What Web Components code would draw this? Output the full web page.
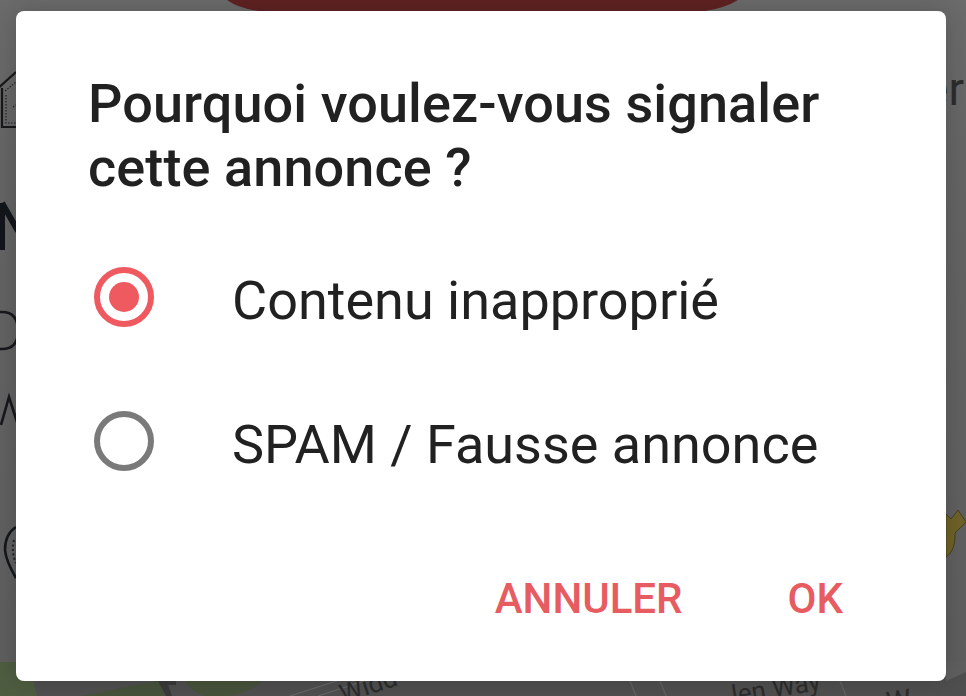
<!DOCTYPE html>
<html lang="fr">
<head>
<meta charset="utf-8">
<title>Signaler</title>
<style>
  html, body { margin: 0; height: 100%; background: #5f5f5f; overflow: hidden; }
</style>
</head>
<body>
<report-dialog title-text="Pourquoi voulez-vous signaler cette annonce ?">
  <report-option checked>Contenu inapproprié</report-option>
  <report-option>SPAM / Fausse annonce</report-option>
  <dialog-action slot="actions">ANNULER</dialog-action>
  <dialog-action slot="actions">OK</dialog-action>
</report-dialog>

<script>
// dimmed page behind the dialog, only the edges show
class MapBackdrop extends HTMLElement {
  constructor() {
    super();
    this.attachShadow({ mode: 'open' });
    this.shadowRoot.innerHTML = `
      <style>
        :host { position: absolute; inset: 0; display: block; }
        svg { display: block; width: 100%; height: 100%; }
        text { font-family: Roboto, "Liberation Sans", sans-serif; fill: #2c2c2c; }
      </style>
      <svg viewBox="0 0 966 696" xmlns="http://www.w3.org/2000/svg">
        <defs>
          <linearGradient id="dim" x1="0" y1="0" x2="0" y2="1">
            <stop offset="0" stop-color="#6b6b6b"/>
            <stop offset="0.25" stop-color="#646464"/>
            <stop offset="1" stop-color="#5e5e5e"/>
          </linearGradient>
        </defs>
        <rect width="966" height="662" fill="url(#dim)"/>
        <path d="M227 0 Q238 8 258 11 H705 Q725 8 738 0 Z" fill="#5f2222"/>

        <!-- house icon -->
        <path d="M-6 92 L16 72 M2 88 V127 H16" fill="none" stroke="#16181a" stroke-width="2.2"/>
        <path d="M5 91 L16 82 M6 95 V123 H16 M13 107 L16 105" fill="none" stroke="#222" stroke-width="1.2" stroke-dasharray="1.5 1.5"/>

        <!-- cut off letters on the left -->
        <path d="M2 203 L18 231 M2 203 V250" fill="none" stroke="#12161a" stroke-width="6"/>
        <path d="M-2 312 H2 Q18 312 18 331 Q18 349 2 349 H-2" fill="none" stroke="#16181b" stroke-width="2.6"/>
        <path d="M1 425 L9 397 L18 425" fill="none" stroke="#16181b" stroke-width="2.6"/>

        <!-- pin icon -->
        <path d="M16 527 Q5 534 5 550 Q6 561 16 578" fill="none" stroke="#14171a" stroke-width="2.6"/>
        <path d="M14 540 Q11 552 16 563" fill="none" stroke="#222" stroke-width="2" stroke-dasharray="2 2.5"/>

        <!-- text behind on the right -->
        <text x="924" y="105" font-size="46">er</text>

        <!-- yellow marker -->
        <path d="M946 514 L951 519 L958 510 L966 522 L958 530 Q954 532 955 538 Q954 552 946 557 Z" fill="#6e6228" stroke="#3d3818" stroke-width="0.8"/>

        <!-- map strip at the bottom -->
        <rect y="662" width="966" height="34" fill="#4f4f4f"/>
        <path d="M0 662 H29 L37 696 H0 Z" fill="#4e5d40"/>
        <path d="M82 696 L156 681 H170 L164 696 Z" fill="#47523b"/>
        <path d="M185 681 H262 Q245 696 222 696 H205 Q192 692 185 681 Z" fill="#47523b"/>
        <path d="M158 681 H176 V685 H168 L172 696 H166 Z" fill="#3a3a3a"/>
        <path d="M290 696 L352 676 M318 696 L380 676" stroke="#6a6a6a" stroke-width="1" fill="none"/>
        <path d="M630 681 L636 696 M660 681 L666 696 M840 681 L846 696" stroke="#5f5f5f" stroke-width="1.5" fill="none"/>
        <path d="M946 681 L966 672 V662 H946 Z" fill="#5f5f5f"/>
        <text x="343" y="703" font-size="26" transform="rotate(-18 343 703)">Widd</text>
        <text x="733" y="704" font-size="26" transform="rotate(-9 733 704)">len Way</text>
        <text x="888" y="712" font-size="28" transform="rotate(-9 888 712)">W</text>
      </svg>
    `;
  }
}

class ReportOption extends HTMLElement {
  constructor() {
    super();
    this.attachShadow({ mode: 'open' });
    this.shadowRoot.innerHTML = `
      <style>
        :host {
          display: flex;
          align-items: center;
          height: 144px;
          font-size: 54px;
          color: #212121;
          --radio-color: #7a7a7a;
        }
        :host([checked]) { --radio-color: #ef5a60; }
        .radio {
          box-sizing: border-box;
          flex: none;
          width: 60px;
          height: 60px;
          margin: 0 78px 0 6px;
          border: 6px solid var(--radio-color);
          border-radius: 50%;
          display: flex;
          align-items: center;
          justify-content: center;
        }
        :host([checked]) .radio::after {
          content: '';
          width: 30px;
          height: 30px;
          border-radius: 50%;
          background: var(--radio-color);
        }
        .label { padding-top: 6px; }
      </style>
      <span class="radio"></span>
      <span class="label"><slot></slot></span>
    `;
  }
}

class DialogAction extends HTMLElement {
  constructor() {
    super();
    this.attachShadow({ mode: 'open' });
    this.shadowRoot.innerHTML = `
      <style>
        :host {
          display: block;
          font-size: 42px;
          font-weight: 500;
          line-height: 48px;
          color: #e65c60;
        }
      </style>
      <slot></slot>
    `;
  }
}

class ReportDialog extends HTMLElement {
  constructor() {
    super();
    this.attachShadow({ mode: 'open' });
    this.shadowRoot.innerHTML = `
      <style>
        :host {
          position: relative;
          display: flex;
          box-sizing: border-box;
          width: 966px;
          height: 696px;
          padding: 11px 20px 15px 16px;
          font-family: Roboto, "Liberation Sans", sans-serif;
        }
        .card {
          position: relative;
          flex: 1;
          display: flex;
          flex-direction: column;
          padding: 61px 72px 0;
          background: #fff;
          border-radius: 8px;
          box-shadow: 0 0 24px rgba(0, 0, 0, 0.18);
        }
        h1 {
          margin: 0 0 25px;
          font-size: 54px;
          line-height: 64px;
          font-weight: 500;
          letter-spacing: 0.1px;
          color: #212121;
        }
        .actions {
          display: flex;
          justify-content: flex-end;
          gap: 105px;
          margin-top: 62px;
          padding-right: 31px;
        }
      </style>
      <map-backdrop></map-backdrop>
      <div class="card">
        <h1></h1>
        <slot></slot>
        <div class="actions"><slot name="actions"></slot></div>
      </div>
    `;
    this.shadowRoot.querySelector('h1').textContent = this.getAttribute('title-text');
  }
}

customElements.define('map-backdrop', MapBackdrop);
customElements.define('report-option', ReportOption);
customElements.define('dialog-action', DialogAction);
customElements.define('report-dialog', ReportDialog);
</script>
</body>
</html>
